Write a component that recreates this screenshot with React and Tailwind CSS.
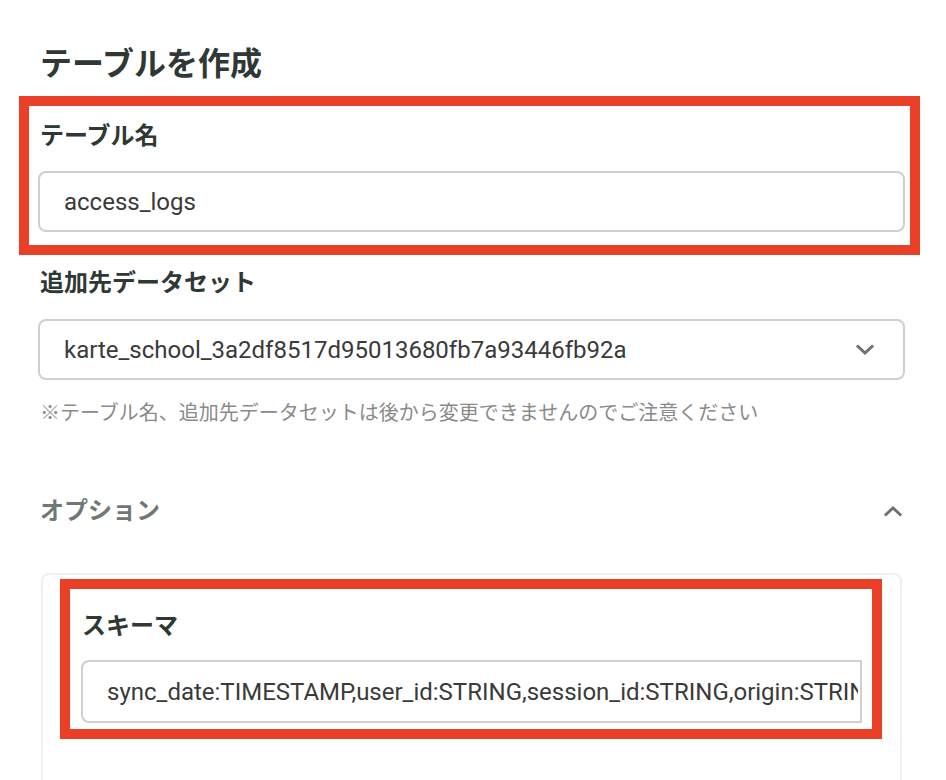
import React from 'react';

const font = { fontFamily: 'Roboto, "Noto Sans CJK JP", sans-serif' };

const ChevronDown = ({ className }) => (
  <svg viewBox="0 0 20 12" className={className} fill="none" stroke="currentColor" strokeWidth="3" strokeLinecap="square">
    <path d="M3 2.5 L10 9 L17 2.5" />
  </svg>
);

const ChevronUp = ({ className }) => (
  <svg viewBox="0 0 20 12" className={className} fill="none" stroke="currentColor" strokeWidth="3" strokeLinecap="square">
    <path d="M3 9.5 L10 3 L17 9.5" />
  </svg>
);

export default function App() {
  return (
    <div className="w-[946px] h-[780px] overflow-hidden bg-white text-[#333a37]" style={font}>
      <div className="ml-[38px] w-[867px]">
        {/* Title */}
        <h1 className="mt-[44px] pl-[2px] text-[32px] leading-[40px] font-bold text-[#2f3834]">テーブルを作成</h1>

        {/* Table name (highlighted) */}
        <div className="mt-[12px] ml-[-19px] mr-[-15px] border-[10px] border-[#ea4027] pl-[9px] pr-[5px] pt-[14px] pb-[13px]">
          <div className="pl-[2px] text-[24px] leading-[32px] font-bold text-[#2f3834]">テーブル名</div>
          <div className="mt-[19px] h-[61px] rounded-lg border-2 border-[#cfcfcf] pl-[24px] flex items-center text-[24px] text-[#3a3a3a]">
            access_logs
          </div>
        </div>

        {/* Dataset */}
        <div className="mt-[12px] pl-[2px] text-[24px] leading-[32px] font-bold text-[#2f3834]">追加先データセット</div>
        <div className="mt-[20px] h-[61px] rounded-lg border-2 border-[#cfcfcf] pl-[24px] pr-[28px] flex items-center justify-between text-[24px] text-[#3a3a3a]">
          <span>karte_school_3a2df8517d95013680fb7a93446fb92a</span>
          <ChevronDown className="w-[20px] h-[12px] text-[#6b7370]" />
        </div>
        <p className="mt-[19px] pl-[2px] text-[20px] leading-[28px] text-[#8a8a8a]">
          ※テーブル名、追加先データセットは後から変更できませんのでご注意ください
        </p>

        {/* Options */}
        <div className="mt-[68px] pl-[2px] flex items-center justify-between">
          <span className="text-[24px] leading-[32px] font-bold text-[#707774]">オプション</span>
          <ChevronUp className="w-[20px] h-[12px] mr-[2px] text-[#6b7370]" />
        </div>

        <div className="mt-[46px] mx-[3px] h-[260px] rounded-lg border-2 border-[#f0f0f0] pt-[4px] pl-[17px] pr-[18px]">
          <div className="border-[10px] border-[#ea4027] pl-[11px] pr-[10px] pt-[21px] pb-[6px]">
            <div className="pl-px text-[24px] leading-[32px] font-bold text-[#2f3834]">スキーマ</div>
            <div className="mt-[18px] h-[63px] rounded-l-lg border-2 border-[#cfcfcf] pl-[24px] pr-[2px] flex items-center overflow-hidden whitespace-nowrap text-[24px] text-[#3a3a3a]">
              <span className="overflow-hidden">sync_date:TIMESTAMP,user_id:STRING,session_id:STRING,origin:STRING</span>
            </div>
          </div>
        </div>
      </div>
    </div>
  );
}
